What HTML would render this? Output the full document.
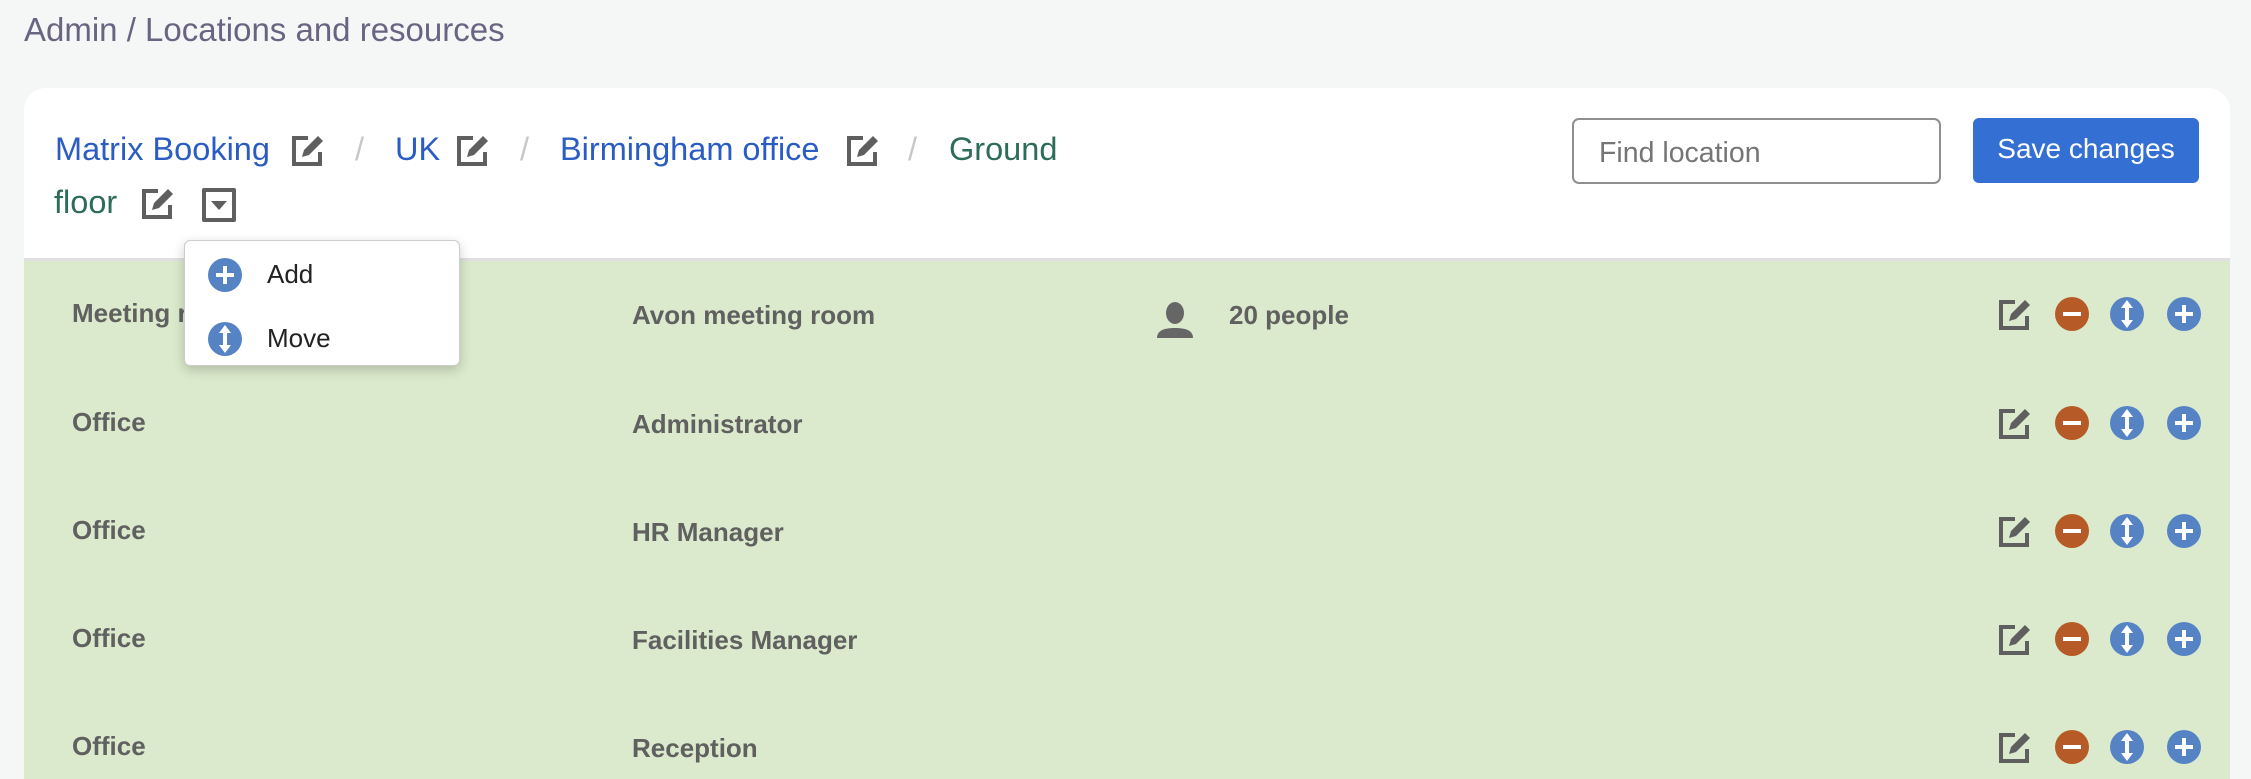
<!DOCTYPE html>
<html><head><style>
*{margin:0;padding:0;box-sizing:border-box}
html,body{width:2251px;height:779px;overflow:hidden}
body{background:#f5f6f6;font-family:"Liberation Sans",sans-serif;position:relative}
.a{position:absolute;white-space:nowrap}
.title{left:24px;top:11px;font-size:33px;color:#6a6483}
.card{left:24px;top:88px;width:2206px;height:691px;background:#fff;border-radius:22px 22px 0 0;overflow:hidden}
.green{position:absolute;left:0;top:170px;right:0;bottom:0;background:#dbeacc;border-top:3px solid #e0e0e0}
.bc{font-size:32.5px;top:131px}
.blue{color:#2a5cc4}.teal{color:#2d6b5a}.sl{color:#c8c8c8}
.row{font-size:26px;font-weight:bold;color:#606060}
.inp{left:1572px;top:118px;width:369px;height:66px;border:2px solid #8f8f8f;border-radius:7px;background:#fff;font-size:28.5px;color:#757575;padding:17px 0 0 25px}
.btn{left:1973px;top:118px;width:226px;height:65px;background:#346fd3;border-radius:6px;color:#fff;font-size:28px;text-align:center;padding-top:15px}
.menu{left:184px;top:240px;width:276px;height:126px;background:#fff;border:1px solid #ccc;border-radius:6px;box-shadow:0 4px 12px rgba(0,0,0,.2)}
.mi{font-size:26px;color:#222}
</style></head><body>
<div class="a title">Admin / Locations and resources</div>
<div class="a card"><div class="green"></div></div>

<svg width="0" height="0" style="position:absolute"><defs>
<symbol id="ed" viewBox="0 0 36 36"><path d="M18 6H4v26h26V20" fill="none" stroke="#5f5f5f" stroke-width="4"/><path d="M12 25l2-7 14-14 5 5-14 14z" fill="#5f5f5f"/></symbol>
<symbol id="mi" viewBox="0 0 36 36"><circle cx="18" cy="18" r="17" fill="#b65a28"/><rect x="9" y="16" width="18" height="4" fill="#fff"/></symbol>
<symbol id="mv" viewBox="0 0 36 36"><circle cx="18" cy="18" r="17" fill="#5683c4"/><path d="M18 4l6 8h-4v12h4l-6 8-6-8h4V12h-4z" fill="#fff"/></symbol>
<symbol id="pl" viewBox="0 0 36 36"><circle cx="18" cy="18" r="17" fill="#5683c4"/><path d="M16 9h4v7h7v4h-7v7h-4v-7H9v-4h7z" fill="#fff"/></symbol>
</defs></svg>

<div class="a bc blue" style="left:55px">Matrix Booking</div>
<svg class="a" style="left:290px;top:132px" width="36" height="36"><use href="#ed"/></svg>
<div class="a bc sl" style="left:355px">/</div>
<div class="a bc blue" style="left:395px">UK</div>
<svg class="a" style="left:455px;top:132px" width="36" height="36"><use href="#ed"/></svg>
<div class="a bc sl" style="left:520px">/</div>
<div class="a bc blue" style="left:560px">Birmingham office</div>
<svg class="a" style="left:845px;top:132px" width="36" height="36"><use href="#ed"/></svg>
<div class="a bc sl" style="left:908px">/</div>
<div class="a bc teal" style="left:949px">Ground</div>
<div class="a bc teal" style="left:54px;top:184px">floor</div>
<svg class="a" style="left:140px;top:185px" width="36" height="36"><use href="#ed"/></svg>
<div class="a" style="left:202px;top:188px;width:34px;height:34px;border:4px solid #5f5f5f;border-radius:2px"><div style="margin:9px auto 0;width:0;height:0;border-left:8px solid transparent;border-right:8px solid transparent;border-top:9px solid #5f5f5f"></div></div>

<div class="a inp">Find location</div>
<div class="a btn">Save changes</div>

<div class="a row" style="left:72px;top:298px">Meeting room</div>
<div class="a row" style="left:632px;top:300px">Avon meeting room</div>
<svg class="a" style="left:1155px;top:300px" width="40" height="40" viewBox="0 0 40 40"><ellipse cx="20" cy="13" rx="9" ry="11" fill="#666"/><path d="M2 38c0-8 8-10 18-10s18 2 18 10z" fill="#666"/></svg>
<div class="a row" style="left:1229px;top:300px">20 people</div>

<div class="a row" style="left:72px;top:407px">Office</div>
<div class="a row" style="left:632px;top:409px">Administrator</div>
<div class="a row" style="left:72px;top:515px">Office</div>
<div class="a row" style="left:632px;top:517px">HR Manager</div>
<div class="a row" style="left:72px;top:623px">Office</div>
<div class="a row" style="left:632px;top:625px">Facilities Manager</div>
<div class="a row" style="left:72px;top:731px">Office</div>
<div class="a row" style="left:632px;top:733px">Reception</div>

<div id="icons"></div>
<script>
var ys=[296,405,513,621,729],h='';
ys.forEach(function(y){
h+='<svg class="a" style="left:1997px;top:'+y+'px" width="36" height="36"><use href="#ed"/></svg>';
h+='<svg class="a" style="left:2054px;top:'+y+'px" width="36" height="36"><use href="#mi"/></svg>';
h+='<svg class="a" style="left:2109px;top:'+y+'px" width="36" height="36"><use href="#mv"/></svg>';
h+='<svg class="a" style="left:2166px;top:'+y+'px" width="36" height="36"><use href="#pl"/></svg>';
});
document.getElementById('icons').innerHTML=h;
</script>

<div class="a menu">
<svg class="a" style="left:22px;top:16px" width="36" height="36"><use href="#pl"/></svg>
<div class="a mi" style="left:82px;top:18px">Add</div>
<svg class="a" style="left:22px;top:80px" width="36" height="36"><use href="#mv"/></svg>
<div class="a mi" style="left:82px;top:82px">Move</div>
</div>
</body></html>
